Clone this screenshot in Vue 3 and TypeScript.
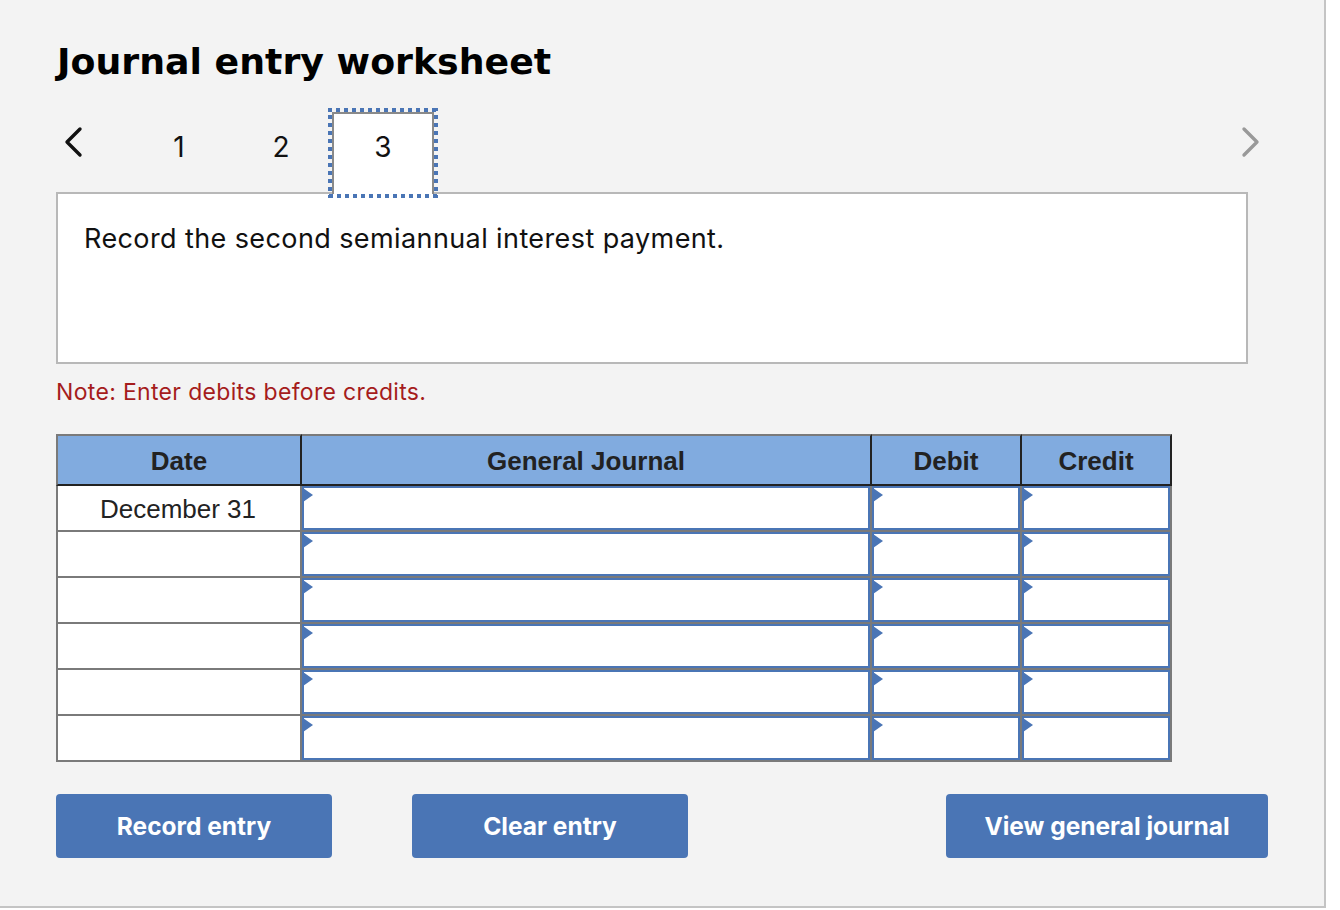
<script setup lang="ts">
const tabs = [1, 2, 3]
const activeTab = 3
const rows = [
  { date: 'December 31' },
  { date: '' },
  { date: '' },
  { date: '' },
  { date: '' },
  { date: '' }
]
</script>

<template>
  <div class="panel">
    <h1 class="title">Journal entry worksheet</h1>

    <div class="tab-row">
      <button class="arrow">
        <svg width="24" height="34" viewBox="0 0 24 34">
          <path d="M18 4 L5 17 L18 30" fill="none" stroke="#111" stroke-width="3.4" stroke-linecap="round" stroke-linejoin="round" />
        </svg>
      </button>
      <div
        v-for="t in tabs"
        :key="t"
        class="tab"
        :class="{ active: t === activeTab }"
      >
        {{ t }}
        <svg v-if="t === activeTab" class="focus-ring" width="110" height="90" viewBox="0 0 110 90">
          <g fill="none" stroke="#4a75b5" stroke-width="4" stroke-dasharray="4 4">
            <path d="M0 2 H110" />
            <path d="M0 88 H110" stroke-dashoffset="-1" />
            <path d="M2 0 V90" stroke-dashoffset="1" />
            <path d="M108 0 V90" stroke-dashoffset="1" />
          </g>
        </svg>
      </div>
      <button class="arrow next">
        <svg width="24" height="34" viewBox="0 0 24 34">
          <path d="M6 4 L19 17 L6 30" fill="none" stroke="#999" stroke-width="3.4" stroke-linecap="round" stroke-linejoin="round" />
        </svg>
      </button>
    </div>

    <div class="prompt">Record the second semiannual interest payment.</div>

    <p class="note">Note: Enter debits before credits.</p>

    <table class="journal">
      <colgroup>
        <col class="c-date" />
        <col class="c-gj" />
        <col class="c-debit" />
        <col class="c-credit" />
      </colgroup>
      <thead>
        <tr>
          <th>Date</th>
          <th>General Journal</th>
          <th>Debit</th>
          <th>Credit</th>
        </tr>
      </thead>
      <tbody>
        <tr v-for="(r, i) in rows" :key="i">
          <td class="date">{{ r.date }}</td>
          <td v-for="c in 3" :key="c" class="field"><div class="input"></div></td>
        </tr>
      </tbody>
    </table>

    <div class="actions">
      <button class="btn">Record entry</button>
      <button class="btn clear">Clear entry</button>
      <button class="btn view">View general journal</button>
    </div>
  </div>
</template>

<style scoped>
.panel {
  box-sizing: border-box;
  width: 1326px;
  height: 908px;
  padding: 36px 0 0 56px;
  background: #f3f3f3;
  border-right: 2px solid #c4c4c4;
  border-bottom: 2px solid #c4c4c4;
  color: #111;
}
.title {
  margin: 0 0 0 1px;
  height: 50px;
  font: 700 36.3px/52px "DejaVu Sans", sans-serif;
  color: #000;
}
.tab-row {
  display: flex;
  margin-top: 26px;
  height: 82px;
  width: 1200px;
  position: relative;
  z-index: 1;
}
.arrow {
  width: 72px;
  height: 60px;
  padding: 0;
  border: 0;
  background: none;
  text-align: left;
  font-size: 0;
}
.arrow svg {
  margin-left: 6px;
}
.arrow.next {
  margin-left: auto;
  width: 24px;
}
.tab {
  box-sizing: border-box;
  width: 102px;
  padding-top: 17px;
  text-align: center;
  font: 400 28px/36px Inter, sans-serif;
  position: relative;
}
.tab.active {
  background: #fff;
  border: 2px solid #8a8a8a;
  border-bottom: 0;
  padding-top: 15px;
}
.focus-ring {
  position: absolute;
  left: -6px;
  top: -6px;
}
.prompt {
  box-sizing: border-box;
  width: 1192px;
  height: 172px;
  margin-top: -2px;
  padding: 27px 26px;
  background: #fff;
  border: 2px solid #b8b8b8;
  font: 400 27px/36px Inter, sans-serif;
  letter-spacing: 0.4px;
}
.note {
  margin: 14px 0 0;
  font: 400 23px/28px Inter, sans-serif;
  letter-spacing: 0.33px;
  color: #a51c1c;
}
.journal {
  margin-top: 28px;
  width: 1116px;
  table-layout: fixed;
  border-collapse: separate;
  border-spacing: 0;
  font-family: "Liberation Sans", Arial, sans-serif;
  color: #222;
}
.c-date { width: 246px; }
.c-gj { width: 570px; }
.c-debit { width: 150px; }
.c-credit { width: 150px; }
.journal th {
  box-sizing: border-box;
  height: 52px;
  padding: 2px 0 0;
  background: #81abdf;
  border-top: 2px solid #7a7a7a;
  border-right: 2px solid #222;
  border-bottom: 2px solid #222;
  font-size: 26px;
  font-weight: 700;
}
.journal th:first-child {
  border-left: 2px solid #7a7a7a;
}
.journal td {
  box-sizing: border-box;
  height: 46px;
  padding: 0;
  background: #fff;
  border-right: 2px solid #7a7a7a;
  border-bottom: 2px solid #7a7a7a;
}
.journal td.date {
  border-left: 2px solid #7a7a7a;
  padding: 2px 2px 0 0;
  text-align: center;
  font-size: 26px;
}
.input {
  box-sizing: border-box;
  height: 44px;
  border: 2px solid #4a75b5;
  position: relative;
}
.input::before {
  content: "";
  position: absolute;
  left: -1px;
  top: 0;
  border-left: 10px solid #4a75b5;
  border-top: 7px solid transparent;
  border-bottom: 7px solid transparent;
}
.actions {
  display: flex;
  margin-top: 32px;
  width: 1212px;
}
.btn {
  box-sizing: border-box;
  width: 276px;
  height: 64px;
  padding: 0;
  border: 0;
  border-radius: 4px;
  background: #4a75b5;
  color: #fff;
  font: 700 24.5px/32px Inter, sans-serif;
}
.btn.clear {
  margin-left: 80px;
}
.btn.view {
  margin-left: auto;
  width: 322px;
}
</style>

<style>
body {
  background: #fff;
}
</style>
